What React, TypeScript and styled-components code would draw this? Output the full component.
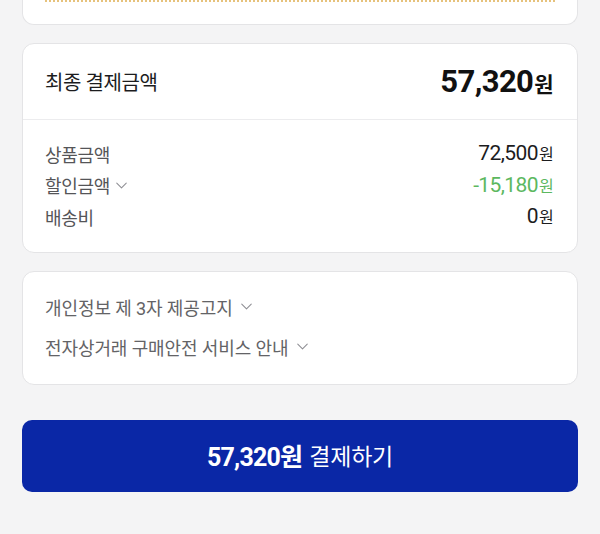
import React from 'react';
import styled, { createGlobalStyle } from 'styled-components';
import { ChevronDown } from 'lucide-react';

const GlobalStyle = createGlobalStyle`
  html, body {
    margin: 0;
    padding: 0;
    background: #f4f4f5;
    font-family: Roboto, "Noto Sans CJK KR", "Noto Sans", sans-serif;
    -webkit-font-smoothing: antialiased;
  }
`;

const Page = styled.div`
  width: 100%;
  min-height: 534px;
  padding: 0 22px;
  box-sizing: border-box;
  display: flex;
  flex-direction: column;
`;

const Card = styled.section`
  background: #ffffff;
  border: 1px solid #e4e4e6;
  border-radius: 12px;
  box-sizing: border-box;
`;

const CouponTail = styled(Card)`
  height: 25px;
  border-top: none;
  border-radius: 0 0 12px 12px;
  padding: 0 22px;
`;

const DottedLine = styled.div`
  border-top: 2px dotted #e6c27c;
`;

const SummaryCard = styled(Card)`
  margin-top: 18px;
`;

const SummaryHeader = styled.div`
  height: 75px;
  display: flex;
  align-items: center;
  justify-content: space-between;
  padding: 0 24px 0 22px;
  border-bottom: 1px solid #ececee;
`;

const Title = styled.h2`
  margin: 0;
  font-size: 20px;
  font-weight: 400;
  letter-spacing: -0.4px;
  color: #1c1c1e;
`;

const Amount = styled.div<{ $size: number; $weight: number; $color: string }>`
  display: flex;
  align-items: baseline;
  font-size: ${p => p.$size}px;
  font-weight: ${p => p.$weight};
  letter-spacing: -0.6px;
  color: ${p => p.$color};
  line-height: 1;
`;

const Unit = styled.span<{ $size: number }>`
  font-family: "Noto Sans CJK KR", sans-serif;
  font-size: ${p => p.$size}px;
  margin-left: 1px;
`;

const Rows = styled.div`
  padding: 18px 24px 19px 22px;
  display: flex;
  flex-direction: column;
`;

const Row = styled.div`
  height: 31.5px;
  display: flex;
  align-items: center;
  justify-content: space-between;
`;

const Label = styled.span`
  display: flex;
  align-items: center;
  gap: 2px;
  font-size: 18px;
  letter-spacing: -0.3px;
  color: #555558;
`;

const NoticeCard = styled(Card)`
  margin-top: 18px;
  padding: 15px 22px 17px;
  display: flex;
  flex-direction: column;
`;

const NoticeItem = styled.div`
  height: 40px;
  display: flex;
  align-items: center;
  gap: 4px;
  font-size: 18px;
  letter-spacing: -0.1px;
  color: #636366;
`;

const PayButton = styled.button`
  margin-top: 35px;
  height: 72px;
  width: 100%;
  border: none;
  border-radius: 10px;
  background: #0a27a6;
  color: #ffffff;
  font-family: inherit;
  font-size: 23px;
  display: flex;
  align-items: center;
  justify-content: center;
  gap: 7px;
  letter-spacing: -0.2px;
  padding-bottom: 3px;
`;

const PayAmount = styled.span`
  font-weight: 700;
  font-size: 25px;
  letter-spacing: -0.8px;
`;

const Chevron = () => <ChevronDown size={19} strokeWidth={1.3} color="#8e8e93" />;

const rows = [
  { label: '상품금액', value: '72,500', color: '#1c1c1e', toggle: false },
  { label: '할인금액', value: '-15,180', color: '#5cb85f', toggle: true },
  { label: '배송비', value: '0', color: '#1c1c1e', toggle: false },
];

const notices = ['개인정보 제 3자 제공고지', '전자상거래 구매안전 서비스 안내'];

const App: React.FC = () => {
  return (
    <>
      <GlobalStyle />
      <Page>
        <CouponTail>
          <DottedLine />
        </CouponTail>

        <SummaryCard>
          <SummaryHeader>
            <Title>최종 결제금액</Title>
            <Amount $size={31} $weight={700} $color="#111111">
              57,320<Unit $size={21}>원</Unit>
            </Amount>
          </SummaryHeader>
          <Rows>
            {rows.map(r => (
              <Row key={r.label}>
                <Label>
                  {r.label}
                  {r.toggle && <Chevron />}
                </Label>
                <Amount $size={21} $weight={400} $color={r.color}>
                  {r.value}<Unit $size={16}>원</Unit>
                </Amount>
              </Row>
            ))}
          </Rows>
        </SummaryCard>

        <NoticeCard>
          {notices.map(n => (
            <NoticeItem key={n}>
              {n}
              <Chevron />
            </NoticeItem>
          ))}
        </NoticeCard>

        <PayButton>
          <PayAmount>57,320원</PayAmount>
          결제하기
        </PayButton>
      </Page>
    </>
  );
};

export default App;
